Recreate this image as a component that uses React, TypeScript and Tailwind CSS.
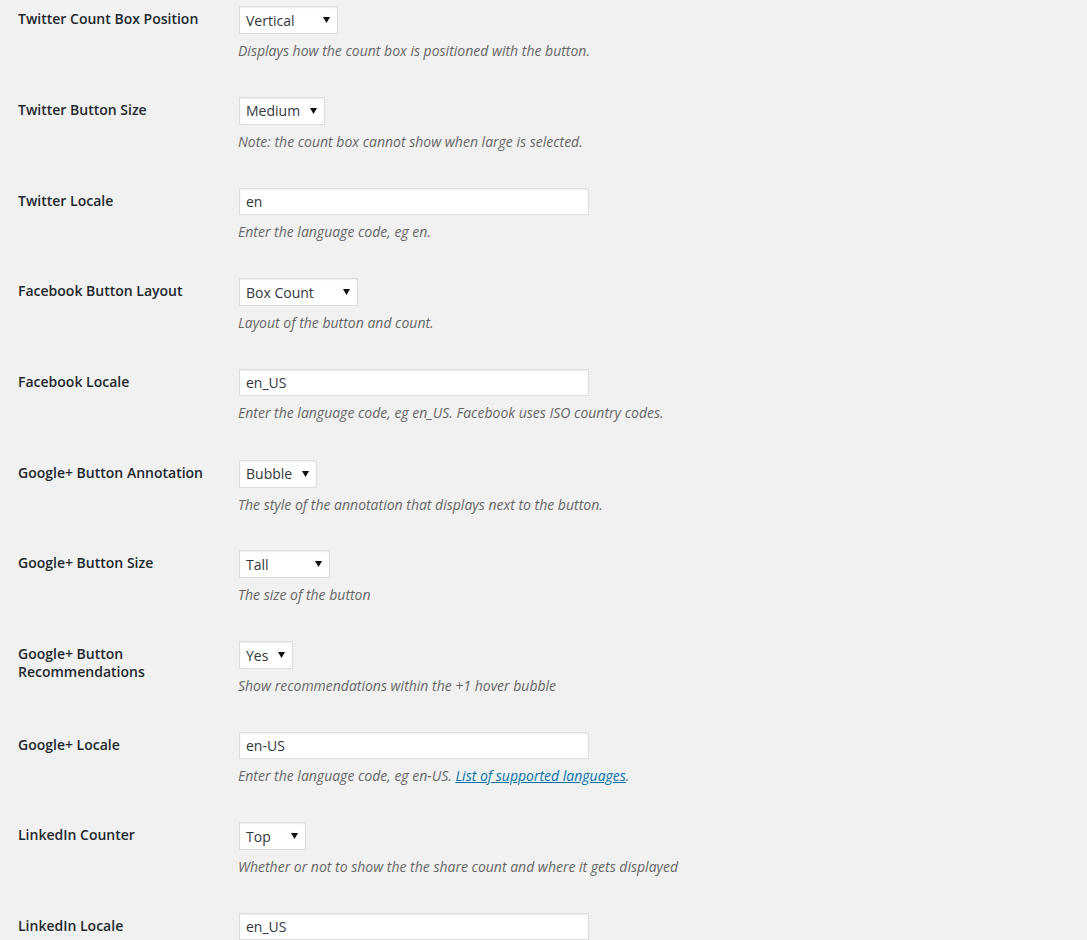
import React from "react";

type Row = {
  label: string[];
  kind: "select" | "text";
  value: string;
  width?: number;
  desc: React.ReactNode;
};

const rows: Row[] = [
  { label: ["Twitter Count Box Position"], kind: "select", value: "Vertical", width: 99, desc: "Displays how the count box is positioned with the button." },
  { label: ["Twitter Button Size"], kind: "select", value: "Medium", width: 86, desc: "Note: the count box cannot show when large is selected." },
  { label: ["Twitter Locale"], kind: "text", value: "en", desc: "Enter the language code, eg en." },
  { label: ["Facebook Button Layout"], kind: "select", value: "Box Count", width: 119, desc: "Layout of the button and count." },
  { label: ["Facebook Locale"], kind: "text", value: "en_US", desc: "Enter the language code, eg en_US. Facebook uses ISO country codes." },
  { label: ["Google+ Button Annotation"], kind: "select", value: "Bubble", width: 78, desc: "The style of the annotation that displays next to the button." },
  { label: ["Google+ Button Size"], kind: "select", value: "Tall", width: 91, desc: "The size of the button" },
  { label: ["Google+ Button", "Recommendations"], kind: "select", value: "Yes", width: 54, desc: "Show recommendations within the +1 hover bubble" },
  {
    label: ["Google+ Locale"],
    kind: "text",
    value: "en-US",
    desc: (
      <>
        Enter the language code, eg en-US.{" "}
        <a href="#" className="text-[#0073aa] underline">List of supported languages</a>.
      </>
    ),
  },
  { label: ["LinkedIn Counter"], kind: "select", value: "Top", width: 67, desc: "Whether or not to show the the share count and where it gets displayed" },
  { label: ["LinkedIn Locale"], kind: "text", value: "en_US", desc: "" },
];

function FakeSelect({ value, width }: { value: string; width: number }) {
  return (
    <div
      className="flex h-[28px] items-center justify-between border border-[#ddd] bg-white pl-[6px] pr-[7px] text-[14px] text-[#32373c] shadow-[inset_0_1px_2px_rgba(0,0,0,0.07)]"
      style={{ width }}
    >
      <span>{value}</span>
      <svg width="7" height="6" viewBox="0 0 7 6">
        <path d="M0 0 H7 L3.5 6 Z" fill="#111" />
      </svg>
    </div>
  );
}

export default function App() {
  return (
    <div className="min-h-[940px] w-full overflow-hidden bg-[#f1f1f1] pl-[18px] font-['Open_Sans',sans-serif]">
      {rows.map((r, i) => (
        <div key={i} className="flex h-[90.7px]">
          <div className="w-[221px] pt-[10.3px] text-[14px] font-semibold leading-[18px] text-[#23282d]">
            {r.label.map((l) => (
              <div key={l}>{l}</div>
            ))}
          </div>
          <div className="pt-[6.3px]">
            {r.kind === "select" ? (
              <FakeSelect value={r.value} width={r.width ?? 100} />
            ) : (
              <div className="flex h-[27px] w-[350px] items-center border border-[#ddd] bg-white px-[6px] text-[14px] text-[#32373c] shadow-[inset_0_1px_2px_rgba(0,0,0,0.07)]">
                {r.value}
              </div>
            )}
            {r.desc && (
              <p className="mt-[7px] -ml-px text-[14px] italic leading-[20px] text-[#666]">{r.desc}</p>
            )}
          </div>
        </div>
      ))}
    </div>
  );
}
